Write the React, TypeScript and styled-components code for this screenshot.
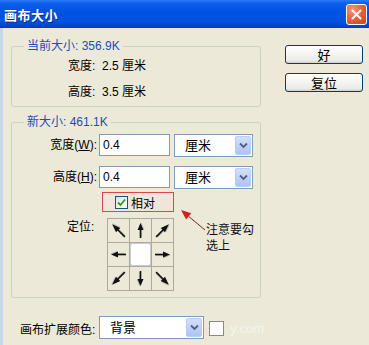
import React from 'react';
import styled, { createGlobalStyle } from 'styled-components';

const Global = createGlobalStyle`
  html, body { margin: 0; padding: 0; background: #ECE9D8; }
  body {
    font-family: "Liberation Sans", "Noto Sans CJK SC", sans-serif;
    font-size: 12px;
    color: #000;
  }
  * { box-sizing: border-box; }
`;

const Window = styled.div`
  position: relative;
  width: 369px;
  height: 345px;
  display: flex;
  flex-direction: column;
  overflow: hidden;
  background: #ECE9D8;
`;

const TitleBar = styled.div`
  height: 28px;
  flex: none;
  display: flex;
  align-items: center;
  justify-content: space-between;
  padding: 0 2px 0 4px;
  background: linear-gradient(
    180deg,
    #2A7BF5 0%,
    #0E5FEA 12%,
    #0054E3 40%,
    #0052DF 75%,
    #0046CC 92%,
    #003DB6 100%
  );
`;

const Title = styled.span`
  color: #fff;
  font-family: "Noto Sans CJK SC", sans-serif;
  font-weight: 700;
  font-size: 13px;
  letter-spacing: 0.5px;
  text-shadow: 1px 1px 0 #0B2C8A;
`;

const CloseButton = styled.div`
  width: 21px;
  height: 21px;
  border: 1px solid #fff;
  border-radius: 3px;
  background: radial-gradient(circle at 30% 25%, #F29A7A 0%, #E2653E 45%, #C8441F 100%);
  display: flex;
  align-items: center;
  justify-content: center;
`;

const Frame = styled.div`
  flex: 1;
  display: flex;
  border-left: 3px solid #C6D5F0;
`;

const LeftCol = styled.div`
  display: flex;
  flex-direction: column;
  padding-left: 8px;
  width: 261px;
`;

const RightCol = styled.div`
  display: flex;
  flex-direction: column;
  gap: 9px;
  padding: 17px 0 0 21px;
`;

const Group = styled.fieldset<{ $top: number }>`
  margin: ${p => p.$top}px 0 0 0;
  padding: 0;
  width: 250px;
  min-inline-size: 0;
  border: 1px solid #D0D0BF;
  border-radius: 3px;
`;

const Legend = styled.legend`
  margin-left: 12px;
  padding: 0 3px;
  line-height: 14px;
  font-size: 12px;
  color: #1E4DB5;
`;

const InfoRows = styled.div`
  display: flex;
  flex-direction: column;
  gap: 6px;
  padding: 3px 0 4px 56px;
`;

const InfoRow = styled.div`
  height: 20px;
  line-height: 20px;
`;

const NewBody = styled.div`
  display: flex;
  flex-direction: column;
  padding: 5px 0 6px 0;
`;

const FieldRow = styled.div<{ $gap: number }>`
  display: flex;
  align-items: flex-start;
  margin-top: ${p => p.$gap}px;
`;

const FieldLabel = styled.label`
  width: 85px;
  margin-right: 2px;
  height: 22px;
  line-height: 22px;
  text-align: right;
`;

const TextInput = styled.div`
  width: 71px;
  height: 22px;
  margin-right: 4px;
  border: 1px solid #7F9DB9;
  background: #fff;
  padding-left: 3px;
  line-height: 20px;
`;

const Select = styled.div<{ $w: number }>`
  width: ${p => p.$w}px;
  height: 23px;
  border: 1px solid #7F9DB9;
  background: #fff;
  display: flex;
  align-items: stretch;
  padding: 1px;
`;

const SelectText = styled.div`
  flex: 1;
  padding-left: 9px;
  line-height: 19px;
  font-size: 13px;
`;

const DropButton = styled.div`
  width: 16px;
  border: 1px solid #B9CCF6;
  border-radius: 2px;
  background: linear-gradient(180deg, #D3DFFA 0%, #C0D1F8 50%, #AFC3F2 100%);
  display: flex;
  align-items: center;
  justify-content: center;
`;

const RelativeBox = styled.div`
  margin: 3px 0 0 90px;
  width: 72px;
  height: 20px;
  border: 1px solid #D24A4A;
  background: #F1E5DB;
  display: flex;
  align-items: center;
  padding-left: 12px;
  gap: 3px;
`;

const CheckBox = styled.div`
  width: 13px;
  height: 13px;
  border: 1px solid #1C5180;
  background: linear-gradient(135deg, #DCDCD7 0%, #fff 80%);
  display: flex;
  align-items: center;
  justify-content: center;
`;

const AnchorRow = styled.div`
  display: flex;
  margin-top: 6px;
  padding-left: 55px;
`;

const AnchorLabel = styled.div`
  width: 40px;
  line-height: 16px;
  padding-top: 1px;
`;

const AnchorGrid = styled.div`
  display: grid;
  grid-template-columns: repeat(3, 21px);
  grid-template-rows: repeat(3, 23px);
  gap: 1px;
  padding: 1px;
  background: #ABAA9C;
`;

const Cell = styled.div<{ $center?: boolean }>`
  background: ${p => (p.$center ? '#fff' : '#ECE9D8')};
  border-radius: ${p => (p.$center ? '3px' : '0')};
  box-shadow: ${p => (p.$center ? 'inset 0 0 0 1px #C8CFD8' : 'none')};
  display: flex;
  align-items: center;
  justify-content: center;
`;

const BottomRow = styled.div`
  display: flex;
  align-items: center;
  margin-top: 18px;
  padding-left: 9px;
  height: 23px;
`;

const BottomLabel = styled.div`
  width: 80px;
  line-height: 23px;
  padding-top: 5px;
`;

const Swatch = styled.div`
  width: 15px;
  height: 15px;
  margin-left: 5px;
  margin-top: 2px;
  border: 1px solid #8A8A80;
  background: #fff;
`;

const Watermark = styled.span`
  margin-left: 6px;
  margin-top: 2px;
  color: rgba(255, 255, 255, 0.55);
  font-size: 13px;
`;

const Button = styled.div`
  width: 78px;
  height: 19px;
  border: 1px solid #003C74;
  border-radius: 3px;
  background: linear-gradient(180deg, #FFFFFF 0%, #F4F4F0 50%, #ECEBE6 85%, #D6D0C5 100%);
  display: flex;
  align-items: center;
  justify-content: center;
  font-size: 13px;
  font-family: "Noto Sans CJK SC", sans-serif;
`;

const Note = styled.div`
  position: absolute;
  left: 206px;
  top: 220px;
  display: flex;
  flex-direction: column;
  font-family: "Noto Sans CJK SC", sans-serif;
  font-size: 12px;
  color: #111;
`;

const NoteLine = styled.span`
  line-height: 17px;
  height: 16px;
`;

const NoteArrow = styled.svg`
  position: absolute;
  left: 178px;
  top: 207px;
`;

const Chevron = () => (
  <svg width="9" height="7" viewBox="0 0 9 7">
    <path d="M1 1.5 L4.5 5 L8 1.5" fill="none" stroke="#4D6185" strokeWidth="1.8" />
  </svg>
);

const Arrow = ({ angle }: { angle: number }) => {
  const len = angle % 90 === 0 ? 0 : 1.5;
  return (
    <svg width="21" height="21" viewBox="0 0 21 21">
      <g transform={`rotate(${angle} 10.5 10.5)`}>
        <g transform="translate(0.8 0.8)" opacity="0.3">
          <line x1={3 - len} y1="10.5" x2="13" y2="10.5" stroke="#555" strokeWidth="1.6" />
          <polygon points={`11,7.5 ${18 + len},10.5 11,13.5`} fill="#555" />
        </g>
        <line x1={3 - len} y1="10.5" x2="13" y2="10.5" stroke="#111" strokeWidth="1.6" />
        <polygon points={`11,7.5 ${18 + len},10.5 11,13.5`} fill="#111" />
      </g>
    </svg>
  );
};

const cells: (number | null)[] = [-135, -90, -45, 180, null, 0, 135, 90, 45];

export default function App() {
  return (
    <Window>
      <Global />
      <TitleBar>
        <Title>画布大小</Title>
        <CloseButton>
          <svg width="11" height="11" viewBox="0 0 11 11">
            <path d="M1.5 1.5 L9.5 9.5 M9.5 1.5 L1.5 9.5" stroke="#fff" strokeWidth="2" strokeLinecap="round" />
          </svg>
        </CloseButton>
      </TitleBar>
      <Frame>
        <LeftCol>
          <Group $top={11}>
            <Legend>当前大小: 356.9K</Legend>
            <InfoRows>
              <InfoRow>宽度:&nbsp; 2.5 厘米</InfoRow>
              <InfoRow>高度:&nbsp; 3.5 厘米</InfoRow>
            </InfoRows>
          </Group>
          <Group $top={8}>
            <Legend>新大小: 461.1K</Legend>
            <NewBody>
              <FieldRow $gap={0}>
                <FieldLabel>宽度(<u>W</u>):</FieldLabel>
                <TextInput>0.4</TextInput>
                <Select $w={79}>
                  <SelectText>厘米</SelectText>
                  <DropButton><Chevron /></DropButton>
                </Select>
              </FieldRow>
              <FieldRow $gap={9}>
                <FieldLabel>高度(<u>H</u>):</FieldLabel>
                <TextInput>0.4</TextInput>
                <Select $w={79}>
                  <SelectText>厘米</SelectText>
                  <DropButton><Chevron /></DropButton>
                </Select>
              </FieldRow>
              <RelativeBox>
                <CheckBox>
                  <svg width="9" height="9" viewBox="0 0 9 9">
                    <path d="M1 4.5 L3.5 7 L8 1.5" fill="none" stroke="#21A121" strokeWidth="1.8" />
                  </svg>
                </CheckBox>
                <span>相对</span>
              </RelativeBox>
              <AnchorRow>
                <AnchorLabel>定位:</AnchorLabel>
                <AnchorGrid>
                  {cells.map((a, i) =>
                    a === null ? <Cell key={i} $center /> : <Cell key={i}><Arrow angle={a} /></Cell>
                  )}
                </AnchorGrid>
              </AnchorRow>
            </NewBody>
          </Group>
          <BottomRow>
            <BottomLabel>画布扩展颜色:</BottomLabel>
            <Select $w={107}>
              <SelectText>背景</SelectText>
              <DropButton><Chevron /></DropButton>
            </Select>
            <Swatch />
            <Watermark>y.com</Watermark>
          </BottomRow>
        </LeftCol>
        <RightCol>
          <Button>好</Button>
          <Button>复位</Button>
        </RightCol>
      </Frame>
      <NoteArrow width="30" height="26" viewBox="0 0 30 26">
        <line x1="10.7" y1="9.4" x2="27" y2="23" stroke="#6A2A2A" strokeWidth="1" />
        <polygon points="3,3 13.3,6.3 8.1,12.5" fill="#D42020" />
      </NoteArrow>
      <Note>
        <NoteLine>注意要勾</NoteLine>
        <NoteLine>选上</NoteLine>
      </Note>
    </Window>
  );
}
